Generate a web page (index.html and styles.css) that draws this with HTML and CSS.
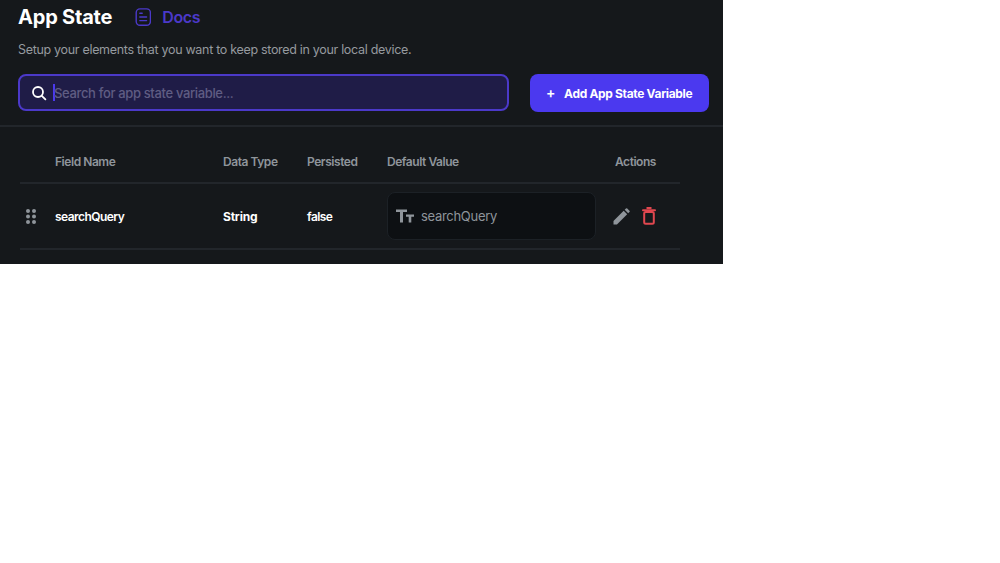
FILE: index.html
```html
<!DOCTYPE html>
<html lang="en">
<head>
    <meta charset="UTF-8">
    <meta name="viewport" content="width=device-width, initial-scale=1.0">
    <title>App State</title>
    <link rel="stylesheet" href="styles.css">
</head>
<body>
    <div class="panel">
        <div class="top">
            <div class="title-row">
                <h1>App State</h1>
                <a class="docs" href="#">
                    <svg width="18" height="18" viewBox="0 0 18 18" fill="none" stroke="currentColor" stroke-width="1.4" stroke-linecap="round">
                        <rect x="3.200" y="0.900" width="14.200" height="16.400" rx="3.800"/>
                        <path d="M6.800 5.200h2.400M6.800 9h6.800M6.800 12.600h6.800"/>
                    </svg>
                    <span>Docs</span>
                </a>
            </div>
            <p class="subtitle">Setup your elements that you want to keep stored in your local device.</p>
            <div class="search-row">
                <div class="search">
                    <svg width="16" height="16" viewBox="0 0 16 16" fill="none" stroke="#fff" stroke-width="1.8" stroke-linecap="round">
                        <circle cx="7" cy="7" r="5"/>
                        <path d="M10.800 10.800l3.600 3.600"/>
                    </svg>
                    <span class="caret"></span>
                    <input type="text" placeholder="Search for app state variable...">
                </div>
                <button class="add-btn"><span class="plus">+</span>Add App State Variable</button>
            </div>
        </div>

        <div class="table">
            <div class="row head">
                <div></div>
                <div>Field Name</div>
                <div>Data Type</div>
                <div>Persisted</div>
                <div>Default Value</div>
                <div class="actions-title">Actions</div>
            </div>
            <div class="row item">
                <div class="grip">
                    <svg width="10" height="15" viewBox="0 0 10 15" fill="#8f959b">
                        <circle cx="2" cy="2" r="2"/><circle cx="8" cy="2" r="2"/>
                        <circle cx="2" cy="7.500" r="2"/><circle cx="8" cy="7.500" r="2"/>
                        <circle cx="2" cy="13" r="2"/><circle cx="8" cy="13" r="2"/>
                    </svg>
                </div>
                <div>searchQuery</div>
                <div class="bold">String</div>
                <div>false</div>
                <div class="value">
                    <svg width="18" height="14" viewBox="0 0 18 14" fill="#8f959b">
                        <path d="M0 0.500h11v2.600H7v10.400H4V3.100H0z"/>
                        <path d="M10 5.500h8v2.200h-2.700v5.800h-2.600V7.700H10z"/>
                    </svg>
                    <span>searchQuery</span>
                </div>
                <div class="actions">
                    <svg width="17" height="17" viewBox="0 0 18 18" fill="#8f959b">
                        <path d="M0.500 17.500v-3.700L11.300 3l3.700 3.700L4.200 17.500z"/>
                        <path d="M12.400 1.900l1.300-1.300a1 1 0 0 1 1.400 0l2.300 2.300a1 1 0 0 1 0 1.400l-1.300 1.300z"/>
                    </svg>
                    <svg width="14" height="18" viewBox="0 0 14 18" fill="none" stroke="#e0474f" stroke-width="2">
                        <path d="M1 3.200h12" stroke-linecap="round"/>
                        <path d="M4.500 1h5"/>
                        <rect x="2.200" y="5" width="9.600" height="11.800" rx="1.500"/>
                    </svg>
                </div>
            </div>
        </div>
    </div>
</body>
</html>
```

FILE: styles.css
```css
* {
    box-sizing: border-box;
}
body {
    margin: 0;
    background-color: #fff;
    font-family: Inter, "Liberation Sans", sans-serif;
}
.panel {
    width: 723px;
    height: 264px;
    overflow: hidden;
    background-color: #15181b;
}

/* header */
.top {
    height: 127px;
    padding: 0 14px 0 18px;
    border-bottom: 2px solid #22262b;
}
.title-row {
    display: flex;
    align-items: center;
    height: 34px;
}
h1 {
    margin: 0;
    font-size: 20px;
    font-weight: 700;
    letter-spacing: -0.2px;
    color: #fff;
}
.docs {
    display: flex;
    align-items: center;
    gap: 11px;
    margin-left: 21px;
    font-size: 16px;
    font-weight: 600;
    letter-spacing: -0.4px;
    color: #4b39c9;
    text-decoration: none;
}
.subtitle {
    margin: 7px 0 0;
    height: 18px;
    font-size: 12.5px;
    line-height: 18px;
    letter-spacing: -0.31px;
    color: #959a9f;
}
.search-row {
    display: flex;
    justify-content: space-between;
    margin-top: 15px;
}
.search {
    display: flex;
    align-items: center;
    width: 491px;
    height: 37px;
    padding-left: 11px;
    border: 2px solid #4b39c9;
    border-radius: 8px;
    background-color: #1f1c47;
}
.caret {
    width: 2px;
    height: 17px;
    margin-left: 6px;
    background-color: #4b39ef;
}
.search input {
    flex: 1;
    margin-left: -1px;
    padding: 0;
    border: none;
    outline: none;
    background: transparent;
    font-family: inherit;
    font-size: 13px;
    font-weight: 500;
    letter-spacing: -0.35px;
}
.search input::placeholder {
    color: #5f5d83;
    opacity: 1;
}
.add-btn {
    display: flex;
    align-items: center;
    width: 179px;
    height: 38px;
    padding: 0 0 0 16px;
    border: none;
    border-radius: 8px;
    background-color: #4b39ef;
    color: #fff;
    font-family: inherit;
    font-size: 12px;
    font-weight: 700;
    letter-spacing: -0.33px;
}
.plus {
    margin: -2px 9px 0 0;
    font-size: 14px;
    font-weight: 600;
}

/* table */
.table {
    width: 660px;
    margin-left: 20px;
}
.row {
    display: grid;
    grid-template-columns: 35px 168px 84px 80px 222px 71px;
    align-items: center;
    border-bottom: 2px solid #22262b;
}
.head {
    height: 57px;
    padding-top: 14px;
    font-size: 12px;
    font-weight: 600;
    letter-spacing: -0.45px;
    color: #8f959b;
}
.actions-title {
    padding-left: 6px;
}
.item {
    height: 66px;
    font-size: 12px;
    font-weight: 600;
    letter-spacing: -0.55px;
    color: #fff;
}
.bold {
    font-weight: 700;
    letter-spacing: -0.2px;
}
.grip {
    display: flex;
    padding-left: 6px;
}
.value {
    display: flex;
    align-items: center;
    gap: 7px;
    width: 209px;
    height: 48px;
    padding-left: 8px;
    border: 1px solid #1c2126;
    border-radius: 8px;
    background-color: #0d1013;
    font-size: 13px;
    font-weight: 400;
    letter-spacing: -0.3px;
    color: #8f959b;
}
.actions {
    display: flex;
    align-items: center;
    gap: 12px;
    padding-left: 4px;
}
```
